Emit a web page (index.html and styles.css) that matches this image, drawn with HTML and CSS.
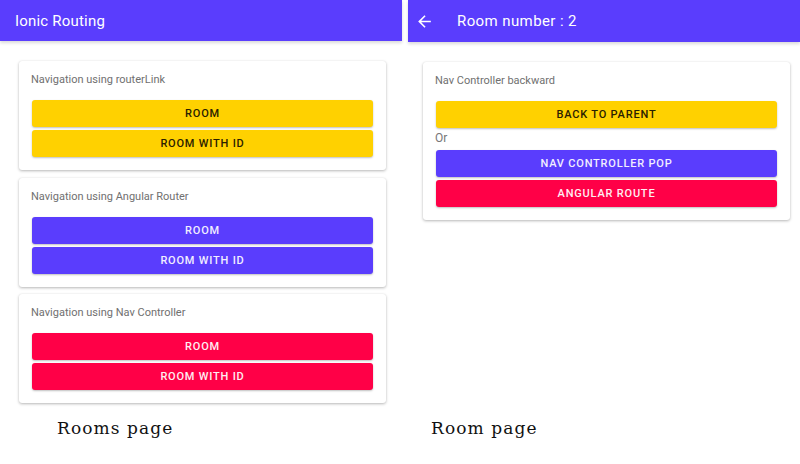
FILE: index.html
```html
<!DOCTYPE html>
<html>
<head>
<meta charset="utf-8">
<link rel="stylesheet" href="styles.css">
</head>
<body>
<div class="screens">
  <div class="screen left">
    <div class="toolbar"><span class="title">Ionic Routing</span></div>
    <div class="content">
      <div class="card">
        <div class="card-label">Navigation using routerLink</div>
        <div class="btn yellow">ROOM</div>
        <div class="btn yellow">ROOM WITH ID</div>
      </div>
      <div class="card">
        <div class="card-label">Navigation using Angular Router</div>
        <div class="btn purple">ROOM</div>
        <div class="btn purple">ROOM WITH ID</div>
      </div>
      <div class="card">
        <div class="card-label">Navigation using Nav Controller</div>
        <div class="btn red">ROOM</div>
        <div class="btn red">ROOM WITH ID</div>
      </div>
    </div>
  </div>
  <div class="screen right">
    <div class="toolbar">
      <svg class="back" width="19" height="19" viewBox="0 0 24 24"><path d="M20 11H7.83l5.59-5.59L12 4l-8 8 8 8 1.41-1.41L7.83 13H20v-2z" fill="#fff"/></svg>
      <span class="title">Room number : 2</span>
    </div>
    <div class="content">
      <div class="card">
        <div class="card-label">Nav Controller backward</div>
        <div class="btn yellow">BACK TO PARENT</div>
        <div class="or">Or</div>
        <div class="btn purple">NAV CONTROLLER POP</div>
        <div class="btn red">ANGULAR ROUTE</div>
      </div>
    </div>
  </div>
</div>
<div class="captions">
  <div class="caption cap-left">Rooms page</div>
  <div class="caption cap-right">Room page</div>
</div>
</body>
</html>
```
FILE: styles.css
```css
html, body {
  margin: 0;
  padding: 0;
  background: #fff;
}
body {
  width: 800px;
  height: 464px;
  overflow: hidden;
  font-family: Roboto, "Liberation Sans", sans-serif;
}
.screens {
  display: flex;
  gap: 6px;
  height: 410px;
}
.screen {
  display: flex;
  flex-direction: column;
}
.screen.left {
  width: 402px;
}
.screen.right {
  width: 392px;
  flex: 1;
}
.toolbar {
  height: 41px;
  background: #5a3dfd;
  display: flex;
  align-items: center;
  color: #fff;
  box-shadow: 0 2px 3px rgba(0,0,0,0.15);
}
.left .toolbar {
  padding-left: 15px;
}
.right .toolbar {
  height: 42px;
  padding-left: 7px;
}
.title {
  font-size: 15px;
  font-weight: 400;
  letter-spacing: 0.2px;
}
.right .title {
  margin-left: 23px;
  letter-spacing: 0.4px;
}
.back {
  display: block;
}
.content {
  padding: 20px 16px 0 19px;
  display: flex;
  flex-direction: column;
  gap: 7.5px;
}
.right .content {
  padding: 20px 10px 0 15px;
}
.card {
  background: #fff;
  border-radius: 3px;
  box-shadow: 0 1px 3px rgba(0,0,0,0.28), 0 0 1px rgba(0,0,0,0.08);
  padding: 12px 13px 13px 13px;
  display: flex;
  flex-direction: column;
  gap: 3px;
}
.card-label {
  font-size: 11px;
  color: #707070;
  margin-bottom: 10px;
  line-height: 14px;
  margin-left: -1px;
}
.btn {
  height: 27px;
  border-radius: 3px;
  display: flex;
  align-items: center;
  justify-content: center;
  font-size: 11px;
  font-weight: 500;
  letter-spacing: 0.8px;
  box-shadow: 0 1px 2px rgba(0,0,0,0.25);
}
.yellow {
  background: #ffd100;
  color: #2a2000;
}
.purple {
  background: #5a3dfd;
  color: #f1eeff;
}
.red {
  background: #ff0047;
  color: #ffeef2;
}
.or {
  font-size: 12px;
  color: #777;
  line-height: 14px;
  margin: 0 0 2px -1px;
}
.right .card {
  padding-top: 11px;
  padding-bottom: 13px;
}
.right .card-label {
  margin-top: 1px;
}
.captions {
  display: flex;
  padding-top: 8px;
}
.caption {
  font-family: "DejaVu Serif", "Liberation Serif", serif;
  font-size: 17px;
  letter-spacing: 1.1px;
  color: #111;
}
.cap-left {
  margin-left: 57px;
  width: 374px;
}
```
